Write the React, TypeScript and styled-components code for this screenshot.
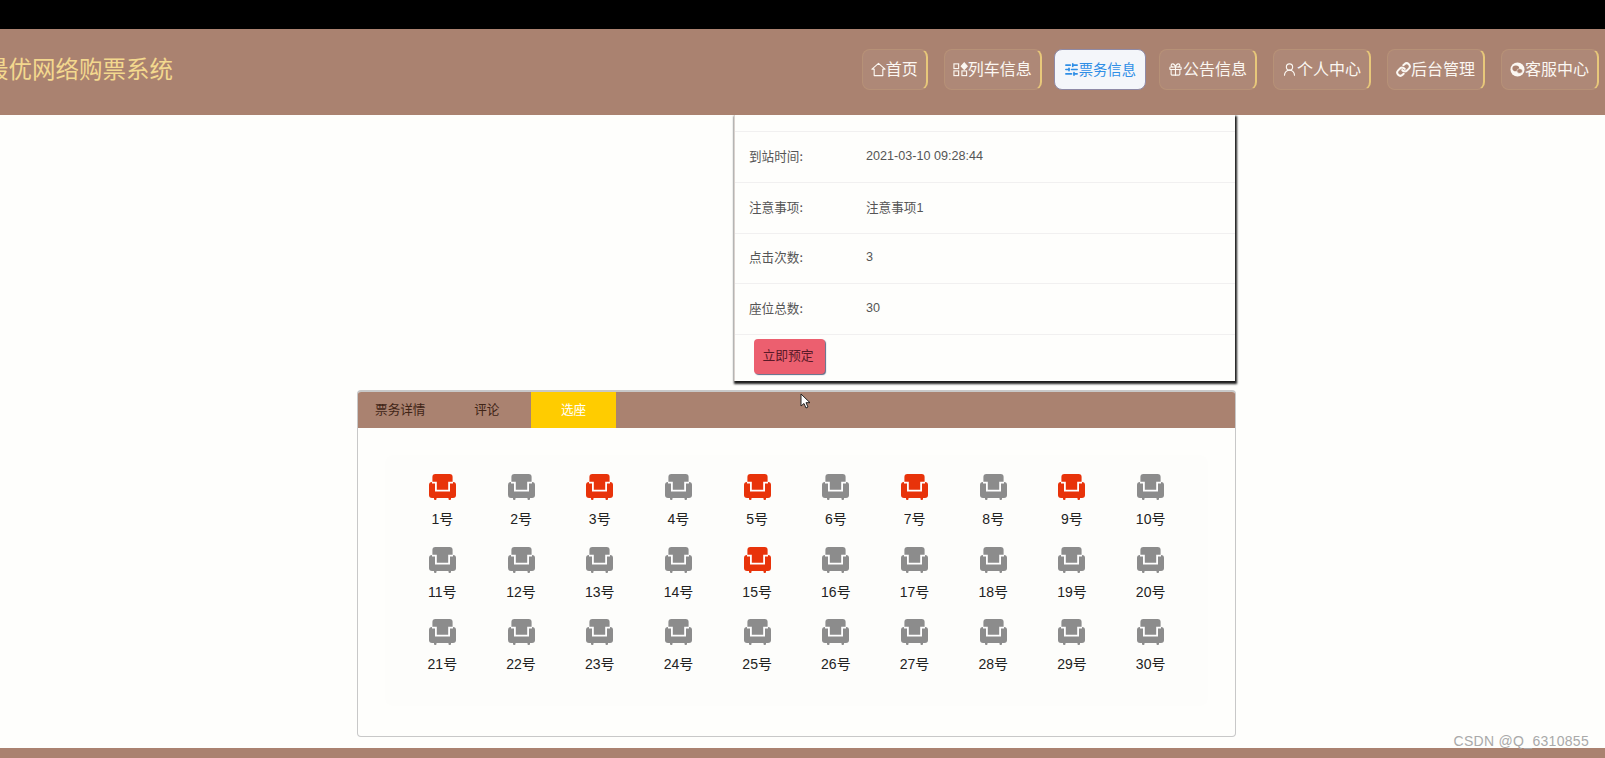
import React from "react";
import styled, { createGlobalStyle } from "styled-components";
import { Gift, Link, SlidersHorizontal, UserRound } from "lucide-react";

const CJK = `"Noto Sans CJK SC", "Liberation Sans", sans-serif`;
const ARIAL = `"Liberation Sans", "Noto Sans CJK SC", sans-serif`;
const BROWN = "#aa8270";

const GlobalStyle = createGlobalStyle`
  html, body {
    margin: 0;
    padding: 0;
    height: 100%;
    overflow: hidden;
    background: #fefefc;
  }
`;

const Page = styled.div`
  position: relative;
  display: flex;
  flex-direction: column;
  width: 1605px;
  height: 758px;
  overflow: hidden;
  background: #fefefc;
  font-family: ${ARIAL};
`;

const BlackBar = styled.div`
  height: 29px;
  flex: none;
  background: #000;
`;

const Nav = styled.header`
  position: relative;
  z-index: 2;
  flex: none;
  height: 86px;
  padding: 0 6px 6px 0;
  box-sizing: border-box;
  display: flex;
  align-items: center;
  justify-content: space-between;
  background: ${BROWN};
`;

const Title = styled.div`
  margin-left: -15px;
  margin-top: -2px;
  color: #f3d88e;
  font-family: ${CJK};
  font-size: 23.5px;
  white-space: nowrap;
`;

const Menu = styled.nav`
  display: flex;
  align-items: center;
  gap: 16px;
`;

const MenuItem = styled.a<{ $active?: boolean }>`
  height: 41px;
  box-sizing: border-box;
  padding: 0 ${(p) => (p.$active ? "9px" : "8px")} 2px;
  display: flex;
  align-items: center;
  border-radius: 8px;
  font-family: ${CJK};
  white-space: nowrap;
  font-size: ${(p) => (p.$active ? "14.3px" : "16px")};
  color: ${(p) => (p.$active ? "#2f8ee6" : "#fbf7f2")};
  background: ${(p) => (p.$active ? "#f4f6fa" : "rgba(255, 255, 255, 0.05)")};
  border: 1px solid ${(p) => (p.$active ? "#8f8aa6" : "rgba(232, 200, 122, 0.14)")};
  border-right: ${(p) => (p.$active ? "1px solid #8f8aa6" : "2px solid #e8c87a")};
  margin: ${(p) => (p.$active ? "0 -3px 0 -4px" : "0")};

  svg {
    width: 15px;
    height: 15px;
    flex: none;
    margin-top: 2px;
  }
`;

const Main = styled.main`
  flex: 1;
  width: 879px;
  margin-left: 357px;
  display: flex;
  flex-direction: column;
`;

const InfoCard = styled.section`
  width: 501px;
  height: 266px;
  margin-left: auto;
  margin-right: 1px;
  box-sizing: border-box;
  border-left: 1px solid #d9d2ce;
  background: #fefefc;
  box-shadow: 1px 2px 2px 1px #1c1c1c;
`;

const CutRow = styled.div`
  height: 16px;
  border-bottom: 1px solid #f1f0f0;
`;

const InfoRow = styled.div`
  height: 49.75px;
  display: grid;
  grid-template-columns: 117px 1fr;
  align-items: center;
  padding-left: 14px;
  border-bottom: 1px solid #f1f0f0;
  color: #555;
  font-size: 12.6px;
`;

const InfoLabel = styled.span`
  font-family: ${CJK};
  margin-top: -3px;
`;

const InfoValue = styled.span`
  font-family: ${ARIAL};
  margin-top: -2px;
`;

const ButtonRow = styled.div`
  padding: 4px 0 0 19px;
`;

const BookButton = styled.button`
  width: 71px;
  height: 35px;
  padding: 0 3px 4px 0;
  border: none;
  border-radius: 4px;
  background: #ec5f6f;
  box-shadow: 1px 1px 1px #5d6a85;
  color: #5a1a28;
  font-family: ${CJK};
  font-size: 12.8px;
`;

const Panel = styled.section`
  height: 347px;
  margin-top: 9px;
  box-sizing: border-box;
  border: 1px solid #c8c8c8;
  border-top-width: 2px;
  border-radius: 4px;
  display: flex;
  flex-direction: column;
  overflow: hidden;
`;

const TabBar = styled.div`
  flex: none;
  height: 36px;
  display: flex;
  background: ${BROWN};
`;

const Tab = styled.div<{ $active?: boolean }>`
  width: ${(p) => (p.$active ? "85px" : "86.5px")};
  padding: 0 ${(p) => (p.$active ? "0" : "2px")} 4px 0;
  box-sizing: border-box;
  display: flex;
  align-items: center;
  justify-content: center;
  font-family: ${CJK};
  font-size: 12.6px;
  color: ${(p) => (p.$active ? "#fff" : "#3f2416")};
  background: ${(p) => (p.$active ? "#ffcc00" : "transparent")};
`;

const SeatBox = styled.div`
  margin: 27px 27px 0;
  height: 251px;
  padding-top: 19px;
  box-sizing: border-box;
  background: #fdfdfb;
  border-radius: 8px;
`;

const SeatGrid = styled.div`
  width: 787px;
  margin: 0 auto;
  display: grid;
  grid-template-columns: repeat(10, 1fr);
  grid-auto-rows: 72.7px;
`;

const Seat = styled.div<{ $taken: boolean }>`
  display: flex;
  flex-direction: column;
  align-items: center;
  color: ${(p) => (p.$taken ? "#e8330a" : "#8c8c8c")};

  svg {
    width: 27px;
    height: 26px;
  }
`;

const SeatLabel = styled.span`
  margin-top: 9px;
  color: #222;
  font-family: ${ARIAL};
  font-size: 14px;
  line-height: 20px;
`;

const Footer = styled.footer`
  flex: none;
  height: 10px;
  background: ${BROWN};
`;

const Watermark = styled.div`
  position: absolute;
  right: 16px;
  bottom: 9px;
  color: #a9a9a9;
  font-family: "Liberation Sans", sans-serif;
  font-size: 14px;
  line-height: 16px;
  letter-spacing: 0.3px;
`;

const Cursor = styled.svg`
  position: absolute;
  left: 800px;
  top: 393px;
  width: 11px;
  height: 16px;
`;

const HomeIcon = () => (
  <svg viewBox="0 0 16 16" fill="none" stroke="currentColor" strokeWidth="1.2">
    <path d="M1 7.6 8 1.5 15 7.6H12.6V14.5H3.4V7.6Z" strokeLinejoin="round" />
  </svg>
);

const AppsIcon = () => (
  <svg viewBox="0 0 16 16" fill="none" stroke="currentColor" strokeWidth="1.2">
    <rect x="1" y="2" width="5" height="5" />
    <rect x="1" y="9.5" width="5" height="5" />
    <rect x="9.5" y="9.5" width="5" height="5" />
    <path d="M12 1 15.2 4.5 12 8 8.8 4.5Z" fill="currentColor" />
  </svg>
);

const WechatIcon = () => (
  <svg viewBox="0 0 16 16">
    <circle cx="8" cy="8" r="7.5" fill="currentColor" />
    <ellipse cx="6.2" cy="6.8" rx="3.6" ry="3" fill={BROWN} />
    <ellipse cx="10.3" cy="9.6" rx="3" ry="2.5" fill={BROWN} stroke="#fbf7f2" strokeWidth="0.6" />
  </svg>
);

const SeatIcon = () => (
  <svg viewBox="0 0 27 26">
    <rect x="3.4" y="0" width="20.2" height="12" rx="3" fill="currentColor" />
    <rect x="0" y="8" width="27" height="16" rx="3" fill="currentColor" />
    <rect x="5" y="23" width="2.5" height="3" rx="1" fill="currentColor" />
    <rect x="19.5" y="23" width="2.5" height="3" rx="1" fill="currentColor" />
    <path d="M3 8.6H6.9V16.6H20.1V8.6H24" fill="none" stroke="#fff" strokeWidth="1.8" />
  </svg>
);

const menu = [
  { label: "首页", icon: <HomeIcon /> },
  { label: "列车信息", icon: <AppsIcon /> },
  { label: "票务信息", icon: <SlidersHorizontal strokeWidth={2.6} />, active: true },
  { label: "公告信息", icon: <Gift strokeWidth={1.8} /> },
  { label: "个人中心", icon: <UserRound strokeWidth={1.8} /> },
  { label: "后台管理", icon: <Link strokeWidth={3.2} /> },
  { label: "客服中心", icon: <WechatIcon /> },
];

const info = [
  ["到站时间:", "2021-03-10 09:28:44"],
  ["注意事项:", "注意事项1"],
  ["点击次数:", "3"],
  ["座位总数:", "30"],
];

const takenSeats = [1, 3, 5, 7, 9, 15];
const seats = Array.from({ length: 30 }, (_, i) => i + 1);

export default function App() {
  return (
    <Page>
      <GlobalStyle />
      <BlackBar />
      <Nav>
        <Title>最优网络购票系统</Title>
        <Menu>
          {menu.map((item) => (
            <MenuItem key={item.label} $active={item.active}>
              {item.icon}
              {item.label}
            </MenuItem>
          ))}
        </Menu>
      </Nav>
      <Main>
        <InfoCard>
          <CutRow />
          {info.map(([label, value]) => (
            <InfoRow key={label}>
              <InfoLabel>{label}</InfoLabel>
              <InfoValue>{value}</InfoValue>
            </InfoRow>
          ))}
          <ButtonRow>
            <BookButton>立即预定</BookButton>
          </ButtonRow>
        </InfoCard>
        <Panel>
          <TabBar>
            <Tab>票务详情</Tab>
            <Tab>评论</Tab>
            <Tab $active>选座</Tab>
          </TabBar>
          <SeatBox>
            <SeatGrid>
              {seats.map((n) => (
                <Seat key={n} $taken={takenSeats.includes(n)}>
                  <SeatIcon />
                  <SeatLabel>{n}号</SeatLabel>
                </Seat>
              ))}
            </SeatGrid>
          </SeatBox>
        </Panel>
      </Main>
      <Footer />
      <Watermark>CSDN @Q_6310855</Watermark>
      <Cursor viewBox="0 0 11 16">
        <path d="M1 1V13L4 10.5 6 15 8 14 6 9.7H10Z" fill="#fff" stroke="#222" strokeWidth="1" />
      </Cursor>
    </Page>
  );
}
